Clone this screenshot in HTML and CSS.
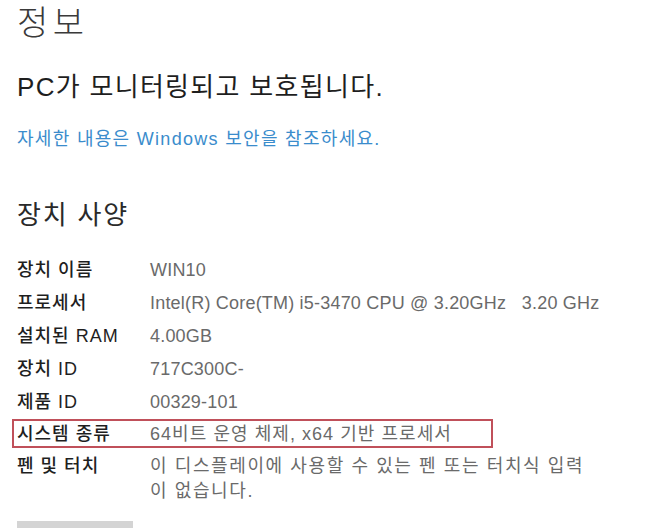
FILE: index.html
```html
<!DOCTYPE html>
<html lang="ko">
<head>
<meta charset="utf-8">
<link rel="stylesheet" href="styles.css">
</head>
<body>
<main class="page">
  <h1 class="title">정보</h1>
  <p class="status">PC가 모니터링되고 보호됩니다.</p>
  <a class="link" href="#">자세한 내용은 Windows 보안을 참조하세요.</a>
  <h2 class="section">장치 사양</h2>
  <div class="specs">
    <div class="row"><span class="label">장치 이름</span><span class="value">WIN10</span></div>
    <div class="row"><span class="label">프로세서</span><span class="value">Intel(R) Core(TM) i5-3470 CPU @ 3.20GHz&nbsp;&nbsp;&nbsp;3.20 GHz</span></div>
    <div class="row"><span class="label">설치된 RAM</span><span class="value">4.00GB</span></div>
    <div class="row"><span class="label">장치 ID</span><span class="value">717C300C-</span></div>
    <div class="row"><span class="label">제품 ID</span><span class="value">00329-101</span></div>
    <div class="row highlight"><span class="label">시스템 종류</span><span class="value value-ko">64비트 운영 체제, x64 기반 프로세서</span></div>
    <div class="row tall"><span class="label">펜 및 터치</span><span class="value value-ko-long">이 디스플레이에 사용할 수 있는 펜 또는 터치식 입력<br>이 없습니다.</span></div>
  </div>
  <div class="button"></div>
</main>
</body>
</html>
```
FILE: styles.css
```css
html, body {
  margin: 0;
  padding: 0;
  background: #ffffff;
}
body {
  font-family: "Liberation Sans", "Noto Sans CJK KR", sans-serif;
  color: #222;
}
.page {
  padding: 3px 0 0 17px;
  width: 656px;
  height: 528px;
  overflow: hidden;
  box-sizing: border-box;
}
.title {
  margin: 0;
  font-size: 34px;
  font-weight: 300;
  line-height: 40px;
  letter-spacing: 4.5px;
  color: #3a3a3a;
}
.status {
  margin: 27px 0 0 0;
  font-size: 26px;
  font-weight: 400;
  line-height: 34px;
  letter-spacing: 1.3px;
  color: #1e1e1e;
}
.link {
  display: block;
  margin-top: 24px;
  font-size: 18px;
  line-height: 22px;
  letter-spacing: 1.3px;
  color: #3a8ccc;
  text-decoration: none;
}
.section {
  margin: 48px 0 0 0;
  font-size: 26px;
  font-weight: 400;
  line-height: 34px;
  letter-spacing: 1.8px;
  color: #2a2a2a;
}
.specs {
  margin-top: 22px;
  display: flex;
  flex-direction: column;
}
.row {
  display: flex;
  font-size: 18px;
  line-height: 33px;
  height: 33px;
}
.label {
  width: 133px;
  flex: none;
  color: #1f1f1f;
  font-weight: 500;
  letter-spacing: 1px;
}
.value {
  color: #6a6a6a;
  letter-spacing: 0.2px;
}
.value-ko {
  letter-spacing: 1.05px;
}
.value-ko-long {
  letter-spacing: 1.6px;
}
.highlight {
  box-sizing: border-box;
  margin-left: -5px;
  padding-left: 3px;
  width: 481px;
  height: 29px;
  line-height: 27px;
  margin-bottom: 4px;
  border: 2px solid #c0505a;
}
.tall {
  height: auto;
  line-height: 25px;
  padding-top: 2px;
}
.button {
  margin-top: 17px;
  width: 116px;
  height: 30px;
  background: #d4d4d4;
}
```
